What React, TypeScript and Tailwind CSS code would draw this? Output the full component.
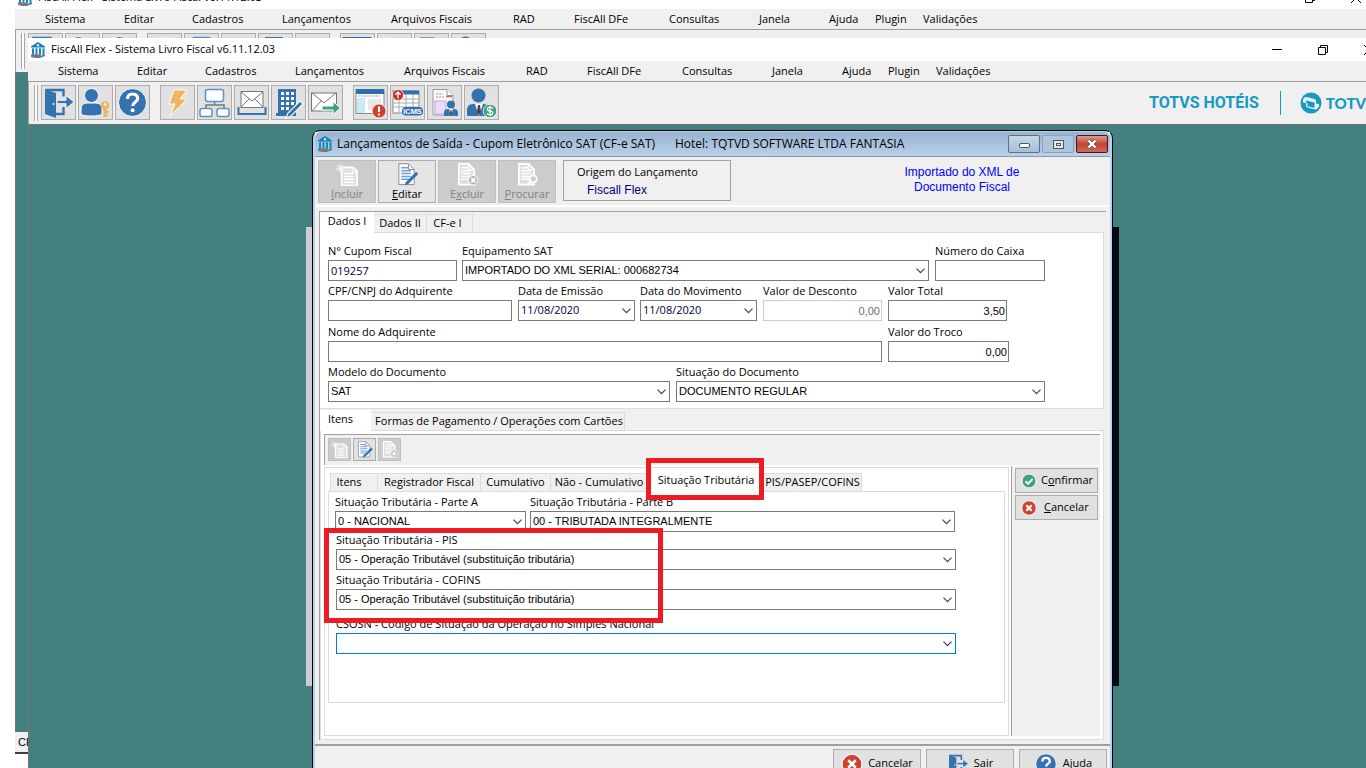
import React, { useId } from 'react';
import clsx from 'clsx';

const menuItems = [
  { label: 'Sistema', width: 'w-[79px]' },
  { label: 'Editar', width: 'w-[68px]' },
  { label: 'Cadastros', width: 'w-[90px]' },
  { label: 'Lançamentos', width: 'w-[109px]' },
  { label: 'Arquivos Fiscais', width: 'w-[122px]' },
  { label: 'RAD', width: 'w-[61px]' },
  { label: 'FiscAll DFe', width: 'w-[95px]' },
  { label: 'Consultas', width: 'w-[90px]' },
  { label: 'Janela', width: 'w-[70px]' },
  { label: 'Ajuda', width: 'w-[46px]' },
  { label: 'Plugin', width: 'w-[48px]' },
  { label: 'Validações', width: 'w-[70px]' },
];

/* ---------- Icons ---------- */

type IconProps = { className?: string };

const BankIcon: React.FC<IconProps> = ({ className = 'size-4' }) => (
  <svg viewBox="0 0 16 16" className={className} aria-hidden="true">
    <path d="M1 4.500 8 0l7 4.500v1H1z" fill="#0f7fb5" />
    <circle cx="8" cy="3.300" r="1.200" fill="#d8eef8" />
    <path d="M2 6.200h2v7H2zM5.500 6.200h2v7h-2zM9 6.200h2v7H9zM12.500 6.200h2v8h-2z" fill="#1787bd" />
    <path d="M1 12.500h7l3 1 4-1v1.500l-5 2H5l-4-1z" fill="#77787a" />
  </svg>
);

const DoorIcon: React.FC<IconProps> = ({ className = 'size-[33px]' }) => (
  <svg viewBox="0 0 33 33" className={className} aria-hidden="true">
    <path d="M3.500 4h18v6.500M21.500 21v7h-11" fill="none" stroke="#3572b0" strokeWidth="2.400" />
    <path d="M3 3l11 4v25L3 28z" fill="#3572b0" />
    <circle cx="11.500" cy="18" r="1" fill="#fff" />
    <path d="M15 14.300h9V9.500l8 6.500-8 6.500v-4.800h-9z" fill="#3572b0" stroke="#f4f4f4" strokeWidth="1" />
  </svg>
);

const UserKeyIcon = () => (
  <svg viewBox="0 0 33 33" className="size-[33px]" aria-hidden="true">
    <circle cx="12.500" cy="9.500" r="7" fill="#3572b0" stroke="#fff" strokeWidth="1" />
    <path d="M2 28v-5q0-6 6-6h9q6 0 6 6v5q-2 2-10.500 2T2 28z" fill="#3572b0" stroke="#fff" strokeWidth="1" />
    <circle cx="26" cy="19.500" r="4.300" fill="#edb55d" />
    <circle cx="26" cy="18.500" r="1.300" fill="#fff" />
    <path d="M24.500 22h3v9h-3zM27 25h3v2h-3zM27 28.500h2v2h-2z" fill="#edb55d" />
  </svg>
);

const HelpIcon: React.FC<IconProps> = ({ className = 'size-[33px]' }) => (
  <svg viewBox="0 0 33 33" className={className} aria-hidden="true">
    <circle cx="16.500" cy="16.500" r="14" fill="#3572b0" stroke="#fff" strokeWidth="1" />
    <path d="M11.500 13q0-5 5-5t5.200 4.600c0 3.400-5 3.400-5 7.400" fill="none" stroke="#fff" strokeWidth="3.200" />
    <circle cx="16.600" cy="24.300" r="2" fill="#fff" />
  </svg>
);

const BoltIcon = () => (
  <svg viewBox="0 0 33 33" className="size-[33px]" aria-hidden="true">
    <path d="M13 4h13l-7 9h7L9 30l5-12H8z" fill="#edb55d" stroke="#fff" strokeWidth="1" />
  </svg>
);

const OrgIcon = () => (
  <svg viewBox="0 0 33 33" className="size-[33px]" aria-hidden="true">
    <path d="M16.500 14v5M8 23v-4h18v4" fill="none" stroke="#777" strokeWidth="1.500" />
    <g fill="#fff" stroke="#5c90c8" strokeWidth="1.500">
      <rect x="7.500" y="3.500" width="18" height="12" rx="2" />
      <rect x="2" y="22.500" width="12" height="8" rx="2" />
      <rect x="19" y="22.500" width="12" height="8" rx="2" />
    </g>
  </svg>
);

const InboxMailIcon = () => (
  <svg viewBox="0 0 33 33" className="size-[33px]" aria-hidden="true">
    <rect x="6" y="5.500" width="22" height="16" fill="#fff" stroke="#777" />
    <path d="M6 6l11 9 11-9M6 21l8-8M28 21l-8-8" fill="none" stroke="#777" />
    <path d="M3.500 21v7h27v-7" fill="none" stroke="#3572b0" strokeWidth="2" />
  </svg>
);

const BuildingIcon = () => (
  <svg viewBox="0 0 33 33" className="size-[33px]" aria-hidden="true">
    <path d="M6 3h18v27H4v-3h2z" fill="#3572b0" />
    <path
      d="M9 6h3v3H9zM14 6h3v3h-3zM19 6h3v3h-3zM9 11h3v3H9zM14 11h3v3h-3zM19 11h3v3h-3zM9 16h3v3H9zM14 16h3v3h-3zM19 16h3v3h-3zM9 21h3v3H9zM14 21h3v3h-3z"
      fill="#fff"
    />
    <path d="M28 15l3 3-12 12-5 2 2-5z" fill="#3572b0" stroke="#fff" strokeWidth="1.200" />
  </svg>
);

const SendMailIcon = () => (
  <svg viewBox="0 0 33 33" className="size-[33px]" aria-hidden="true">
    <rect x="2.500" y="7" width="25" height="18" fill="#fff" stroke="#777" />
    <path d="M3 7l12 10L27 7M3 25l9-10" fill="none" stroke="#777" />
    <path d="M13 20h11v-4.500l7.500 6.500-7.500 6.500V24H13z" fill="#3fa37c" stroke="#fff" strokeWidth="1" />
  </svg>
);

const WindowAlertIcon = () => (
  <svg viewBox="0 0 33 33" className="size-[33px]" aria-hidden="true">
    <rect x="2" y="3.500" width="28" height="24" fill="#fff" stroke="#8a8a8a" />
    <rect x="2" y="3" width="28" height="5" fill="#2f6fb0" />
    <rect x="3" y="12" width="8" height="15" fill="#c9eafa" />
    <path d="M4 10h22" stroke="#999" strokeDasharray="2 1" />
    <rect x="14" y="13" width="13" height="11" fill="#e7e7e7" />
    <circle cx="25" cy="25" r="7" fill="#cc4430" stroke="#fff" strokeWidth=".8" />
    <path d="M25 20.500v5.500M25 27.500v2" stroke="#fff" strokeWidth="2" />
  </svg>
);

const IcmsIcon = () => (
  <svg viewBox="0 0 33 33" className="size-[33px]" aria-hidden="true">
    <rect x="2" y="5" width="26" height="22" fill="#fff" stroke="#888" />
    <rect x="2" y="4.500" width="26" height="4" fill="#2f6fb0" />
    <path d="M2 13h26M2 17h26M2 21h26M8 8v19M15 8v19M22 8v19" stroke="#aaa" />
    <circle cx="7" cy="9" r="5.500" fill="#cc2a1c" stroke="#fff" strokeWidth=".8" />
    <path d="M7 12.500V6M4.300 8.700 7 6l2.700 2.700" fill="none" stroke="#fff" strokeWidth="1.400" />
    <rect x="11" y="21" width="21" height="8.500" rx="4" fill="#2f6fb0" />
    <text x="21.500" y="28" textAnchor="middle" fontSize="7.500" fontWeight="700" fill="#fff" fontFamily="Liberation Sans, sans-serif">ICMS</text>
  </svg>
);

const DocUserIcon = () => (
  <svg viewBox="0 0 33 33" className="size-[33px]" aria-hidden="true">
    <path d="M5 3.500h14l6 6V29H5z" fill="#fafafa" stroke="#9a9a9a" />
    <path d="M19 3.500v6h6" fill="#fafafa" stroke="#9a9a9a" />
    <path d="M18 10.500h6" stroke="#d9694a" strokeWidth="1.500" />
    <path d="M8 8h7M8 11h8" stroke="#999" strokeDasharray="2 1" />
    <rect x="7" y="15" width="11" height="13" fill="#eadcf5" stroke="#c3a2dd" />
    <circle cx="23" cy="18.500" r="4" fill="#3572b0" />
    <path d="M16 30v-3q0-4 4-4h6q4 0 4 4v3z" fill="#3572b0" />
    <path d="M21 23h4l-2 6z" fill="#fff" />
    <path d="M22.500 24h1l.5 4-1 1-1-1z" fill="#444" />
  </svg>
);

const UserMoneyIcon = () => (
  <svg viewBox="0 0 33 33" className="size-[33px]" aria-hidden="true">
    <circle cx="13.500" cy="9.500" r="7" fill="#3572b0" />
    <path d="M2 30v-6q0-6 6-6h11q5 0 5 6v6z" fill="#3572b0" />
    <path d="M10 18h8l-4 12z" fill="#fff" />
    <path d="M13 19h2l1 7-2 3-2-3z" fill="#444" />
    <circle cx="25" cy="25" r="6.800" fill="#3fa37c" stroke="#fff" strokeWidth=".8" />
    <path d="M28 22.500q-1-1.300-3-1.300-2.600 0-2.600 1.900T25 25t2.700 2-2.700 1.900q-2.200 0-3-1.400M25 19.800v10.400" fill="none" stroke="#fff" strokeWidth="1.300" />
  </svg>
);

type DocKind = 'new' | 'edit' | 'delete' | 'search';

const DocIcon: React.FC<{ kind: DocKind; className?: string }> = ({ kind, className = 'size-6' }) => {
  const off = kind !== 'edit';
  return (
    <svg viewBox="0 0 24 24" className={className} aria-hidden="true">
      <path
        d={kind === 'new' ? 'M6.500 4.500h12l4 4v15h-16z' : 'M3.500 .8h10l6 6v15.700h-16z'}
        fill={off ? '#dedede' : '#fff'}
        stroke={off ? '#fff' : '#8b8b8b'}
        strokeWidth={off ? 1.8 : 1}
      />
      <path
        d={kind === 'new' ? 'M9 11h10M9 14h10M9 17h10M9 20h10' : 'M6 5h7M6 8h10M6 11h10M6 14h10M6 17h8'}
        stroke={off ? '#fff' : '#6f9fd4'}
        strokeWidth="1.500"
      />
      <path d={kind === 'new' ? 'M17.500 4.500v5h5' : 'M13.500 .8v6h6'} fill="none" stroke={off ? '#fff' : '#8b8b8b'} />
      {kind === 'new' && (
        <path d="M5 1v9M.5 5.500h9M2 2.500l6 6M8 2.500l-6 6" stroke="#f4f4f4" strokeWidth="1.200" />
      )}
      {kind === 'edit' && <path d="M10 23l1-3L21.500 9.500l2 2L13 22z" fill="#2f72b8" stroke="#2f72b8" strokeWidth=".5" />}
      {kind === 'delete' && (
        <>
          <circle cx="18.500" cy="18" r="5" fill="#b5b5b5" stroke="#fff" />
          <path d="M16.300 15.800l4.400 4.400M20.700 15.800l-4.400 4.400" stroke="#fff" strokeWidth="2" />
        </>
      )}
      {kind === 'search' && (
        <>
          <circle cx="18.500" cy="16.500" r="3.700" fill="#ccc" stroke="#fff" strokeWidth="1.800" />
          <path d="M15.500 19.500l-3 3" stroke="#fff" strokeWidth="2" />
        </>
      )}
    </svg>
  );
};

const CheckCircleIcon = () => (
  <svg viewBox="0 0 16 16" className="size-4" aria-hidden="true">
    <circle cx="8" cy="8" r="7" fill="#3fa37c" stroke="#fff" />
    <path d="M4.500 8.200l2.600 2.500L11.600 6" fill="none" stroke="#fff" strokeWidth="2" />
  </svg>
);

const CrossCircleIcon: React.FC<IconProps> = ({ className = 'size-4' }) => (
  <svg viewBox="0 0 16 16" className={className} aria-hidden="true">
    <circle cx="8" cy="8" r="7.200" fill="#cc4430" stroke="#fff" strokeWidth=".8" />
    <path d="M5.300 5.300l5.400 5.400M10.700 5.300l-5.400 5.400" stroke="#fff" strokeWidth="2" />
  </svg>
);

const TotvsMark = () => (
  <svg viewBox="0 0 22 22" className="size-[22px]" aria-hidden="true">
    <circle cx="11" cy="11" r="10.500" fill="#159ac4" />
    <path
      d="M5 5q3 0 9.500 2 1.500.5 1.500 2v2.500l3 .5v2.500l-2.500 3q-5-.3-9-2-1.500-.7-1.500-2.200V11l-3-.5V7.500z"
      fill="#f0f0f0"
    />
    <path d="M6 8.500l8.500 2v5.500l-7-1.800v-3L6 10.500z" fill="#159ac4" />
  </svg>
);

/* ---------- Application window ---------- */

const toolGroups = [
  [
    { name: 'Sair', icon: <DoorIcon /> },
    { name: 'Usuário', icon: <UserKeyIcon /> },
    { name: 'Ajuda', icon: <HelpIcon /> },
  ],
  [
    { name: 'Execução rápida', icon: <BoltIcon /> },
    { name: 'Estrutura', icon: <OrgIcon /> },
    { name: 'Entradas', icon: <InboxMailIcon /> },
    { name: 'Empresa', icon: <BuildingIcon /> },
    { name: 'Saídas', icon: <SendMailIcon /> },
  ],
  [
    { name: 'Pendências', icon: <WindowAlertIcon /> },
    { name: 'ICMS', icon: <IcmsIcon /> },
    { name: 'Documentos', icon: <DocUserIcon /> },
    { name: 'Clientes', icon: <UserMoneyIcon /> },
  ],
];

const AppWindow: React.FC<{ className: string; status?: string }> = ({ className, status }) => (
  <section className={clsx('absolute flex flex-col bg-[#f0f0f0]', className)}>
    <header className="flex h-[23px] shrink-0 items-center bg-white pl-[2px]">
      <BankIcon />
      <h1 className="ml-[5px]">FiscAll Flex - Sistema Livro Fiscal v6.11.12.03</h1>
      <div className="ml-auto flex">
        <button aria-label="Minimizar" className="flex h-5 w-[46px] items-center justify-center">
          <svg viewBox="0 0 10 10" className="size-[10px]"><path d="M0 4.500h10" stroke="#000" /></svg>
        </button>
        <button aria-label="Restaurar" className="flex h-5 w-[46px] items-center justify-center">
          <svg viewBox="0 0 10 10" className="size-[10px]" fill="none" stroke="#000">
            <path d="M.5 2.500h7v7h-7zM2.500 2.500v-2h7v7h-2" />
          </svg>
        </button>
        <button aria-label="Fechar" className="flex h-5 w-[46px] items-center justify-center">
          <svg viewBox="0 0 10 10" className="size-[10px]"><path d="M0 0l10 10M10 0L0 10" stroke="#000" /></svg>
        </button>
      </div>
    </header>
    <nav className="flex h-[21px] shrink-0 items-center border-b border-[#9c9f9c] pl-[30px]">
      {menuItems.map((item) => (
        <button key={item.label} className={clsx('shrink-0 text-left whitespace-nowrap', item.width)}>
          {item.label}
        </button>
      ))}
    </nav>
    <div className="flex h-[42px] shrink-0 items-start border-l border-[#a0a0a0] pt-[3px] pl-[5px]">
      <div className="mr-[3px] h-9 w-1 border-x border-[#a8a8a8] bg-white" />
      {toolGroups.map((group, i) => (
        <div key={i} className="mr-[10px] flex gap-[2px]">
          {group.map((tool) => (
            <button
              key={tool.name}
              aria-label={tool.name}
              className="flex size-[35px] items-center justify-center border border-[#adadad] bg-[#e1e1e1]"
            >
              {tool.icon}
            </button>
          ))}
        </div>
      ))}
      <div className="mr-[18px] ml-auto flex h-9 items-center text-[#159ac4]">
        <span className="font-['Roboto',sans-serif] text-[16px] font-bold whitespace-nowrap">TOTVS HOTÉIS</span>
        <span className="mr-[19px] ml-[21px] h-6 w-px bg-[#159ac4]" />
        <TotvsMark />
        <span className="ml-1 font-['Lato',sans-serif] text-[15px] font-black">TOTVS</span>
      </div>
    </div>
    <div className="min-h-0 grow border-t border-l border-[#747474] bg-[#43807f]" />
    {status && (
      <footer className="h-[22px] shrink-0 border-b-2 border-[#404040] pt-[2px] pl-[3px] font-['Liberation_Sans',sans-serif]">
        {status}
      </footer>
    )}
  </section>
);

/* ---------- Form controls ---------- */

const Chevron = () => (
  <svg viewBox="0 0 9 6" className="pointer-events-none absolute top-2 right-1 h-[6px] w-[9px]" aria-hidden="true">
    <path d="M.5.7 4.500 4.700 8.500.7" fill="none" stroke="#444" strokeWidth="1.200" />
  </svg>
);

type FieldProps = {
  label: string;
  className: string;
  value?: string;
  select?: boolean;
  number?: boolean;
  segoe?: boolean;
  disabled?: boolean;
  focused?: boolean;
};

const Field: React.FC<FieldProps> = ({ label, className, value = '', select, number, segoe, disabled, focused }) => {
  const id = useId();
  const box = clsx(
    'block h-[21px] w-full appearance-none border bg-white px-[2px] text-[11px] outline-none',
    disabled ? 'border-[#cccccc] text-[#6d6d6d]' : focused ? 'border-[#0078d7]' : 'border-[#7a7a7a]',
    segoe ? "font-['Open_Sans',sans-serif] text-[#00003c]" : "font-['Liberation_Sans',sans-serif]",
    number && 'pr-px text-right',
  );
  return (
    <div className={className}>
      <label htmlFor={id} className="block h-[19px] leading-5 whitespace-nowrap">{label}</label>
      {select ? (
        <div className="relative">
          <select id={id} className={box} defaultValue={value}>
            <option>{value}</option>
          </select>
          <Chevron />
        </div>
      ) : (
        <input id={id} className={box} defaultValue={value} disabled={disabled} />
      )}
    </div>
  );
};

const Tab: React.FC<{ className: string; active?: boolean; children: React.ReactNode }> = ({ className, active, children }) => (
  <button
    role="tab"
    aria-selected={!!active}
    className={clsx(
      'shrink-0 whitespace-nowrap border-[#dcdcdc]',
      active ? 'relative -mb-px h-[21px] bg-white pb-[2px]' : 'h-[18px] border-t border-r bg-[#f0f0f0]',
      className,
    )}
  >
    {children}
  </button>
);

const docActions: { kind: DocKind; key: string; before?: string; after: string }[] = [
  { kind: 'new', key: 'I', after: 'ncluir' },
  { kind: 'edit', key: 'E', after: 'ditar' },
  { kind: 'delete', before: 'E', key: 'x', after: 'cluir' },
  { kind: 'search', key: 'P', after: 'rocurar' },
];

const itemActions: { kind: DocKind; name: string }[] = [
  { kind: 'new', name: 'Incluir item' },
  { kind: 'edit', name: 'Editar item' },
  { kind: 'delete', name: 'Excluir item' },
];

const DialogTitle = () => (
  <header className="flex h-[25px] items-center rounded-t-md border-b border-[#8e99a5] bg-linear-to-b from-[#9ab3d0] to-[#b9d1ea] pl-[2px]">
    <BankIcon />
    <h2 className="ml-1 w-[338px] text-[12px]">Lançamentos de Saída - Cupom Eletrônico SAT (CF-e SAT)</h2>
    <span className="text-[12px]">Hotel: TQTVD SOFTWARE LTDA FANTASIA</span>
    <div className="mr-[2px] ml-auto flex gap-[2px]">
      <button aria-label="Minimizar" className="flex h-[18px] w-8 items-center justify-center rounded-xs border border-[#5d7085] bg-linear-to-b from-[#c6d8ea] to-[#a5bfd9]">
        <span className="mt-[3px] h-[5px] w-[11px] rounded-xs border border-[#555] bg-white" />
      </button>
      <button aria-label="Maximizar" className="flex h-[18px] w-8 items-center justify-center rounded-xs border border-[#8ba3bb] bg-[#adc5df]">
        <span className="flex h-[9px] w-[11px] items-center justify-center border border-[#555] bg-[#e8e8e8]">
          <span className="h-[3px] w-[5px] border border-[#555]" />
        </span>
      </button>
      <button aria-label="Fechar" className="flex h-[18px] w-8 items-center justify-center rounded-xs border border-[#4a1420] bg-linear-to-b from-[#dd9a8c] via-[#c0452f] to-[#cf6a50]">
        <svg viewBox="0 0 12 10" className="h-[10px] w-3">
          <path d="M2.500 1.500l7 7M9.500 1.500l-7 7" stroke="#555" strokeWidth="4" />
          <path d="M2.500 1.500l7 7M9.500 1.500l-7 7" stroke="#fff" strokeWidth="2.400" />
        </svg>
      </button>
    </div>
  </header>
);

const DialogToolbar = () => (
  <div className="flex h-[50px] border-b-2 border-white px-[3px] pt-[3px]">
    <div className="flex gap-[2px]">
      {docActions.map((action) => (
        <button
          key={action.kind}
          className={clsx(
            'flex h-[43px] w-[58px] flex-col items-center border pt-[2px] leading-4',
            action.kind === 'edit' ? 'border-[#adadad] bg-[#e5e5e5]' : 'border-[#bfbfbf] bg-[#cccccc] text-[#838383]',
          )}
        >
          <DocIcon kind={action.kind} />
          <span>{action.before}<span className="underline">{action.key}</span>{action.after}</span>
        </button>
      ))}
    </div>
    <div className="ml-[7px] h-[41px] w-[168px] border border-[#a0a0a0] pl-[13px] leading-[18px]">
      <p className="pt-[2px]">Origem do Lançamento</p>
      <p className="pl-[10px] font-['Liberation_Sans',sans-serif] text-[12px] text-[#000080]">Fiscall Flex</p>
    </div>
    <p className="mr-[75px] ml-auto w-[140px] pt-[5px] text-center font-['Liberation_Sans',sans-serif] text-[12px] leading-[15px] text-[#0000ff]">
      Importado do XML de Documento Fiscal
    </p>
  </div>
);

const DocumentData = () => (
  <>
    <div role="tablist" className="flex items-end">
      <Tab active className="w-[54px]">Dados I</Tab>
      <Tab className="w-[53px]">Dados II</Tab>
      <Tab className="w-[46px] pr-[4px]">CF-e I</Tab>
    </div>
    <div className="mr-[2px] h-[177px] border-t border-r border-b border-[#dcdcdc] bg-white pt-2 pl-2">
      <div className="flex">
        <Field label="N° Cupom Fiscal" className="mr-[5px] w-[129px]" value="019257" segoe />
        <Field label="Equipamento SAT" className="mr-[6px] w-[467px]" value="IMPORTADO DO XML SERIAL: 000682734" select />
        <Field label="Número do Caixa" className="w-[110px]" />
      </div>
      <div className="flex">
        <Field label="CPF/CNPJ do Adquirente" className="mr-[6px] w-[184px]" />
        <Field label="Data de Emissão" className="mr-[5px] w-[117px]" value="11/08/2020" select segoe />
        <Field label="Data do Movimento" className="mr-[6px] w-[117px]" value="11/08/2020" select segoe />
        <Field label="Valor de Desconto" className="mr-[6px] w-[119px]" value="0,00" number disabled />
        <Field label="Valor Total" className="w-[119px]" value="3,50" number />
      </div>
      <div className="mt-px flex">
        <Field label="Nome do Adquirente" className="mr-[6px] w-[554px]" />
        <Field label="Valor do Troco" className="w-[121px]" value="0,00" number />
      </div>
      <div className="flex">
        <Field label="Modelo do Documento" className="mr-[6px] w-[342px]" value="SAT" select />
        <Field label="Situação do Documento" className="w-[369px]" value="DOCUMENTO REGULAR" select />
      </div>
    </div>
  </>
);

const TaxSituation = () => (
  <div className="grow border border-[#dcdcdc] bg-white px-[3px] pt-[3px]">
    <div role="tablist" className="flex items-end pl-[2px]">
      <Tab className="w-12 border-l pr-[10px]">Itens</Tab>
      <Tab className="w-[103px]">Registrador Fiscal</Tab>
      <Tab className="w-[70px]">Cumulativo</Tab>
      <Tab className="w-[97px]">Não - Cumulativo</Tab>
      <Tab active className="w-[116px]">Situação Tributária</Tab>
      <Tab className="w-[98px]">PIS/PASEP/COFINS</Tab>
    </div>
    <div className="h-[212px] border border-[#dcdcdc] pl-[6px]">
      <div className="flex gap-1">
        <Field label="Situação Tributária - Parte A" className="w-[191px]" value="0 - NACIONAL" select />
        <Field label="Situação Tributária - Parte B" className="w-[425px]" value="00 - TRIBUTADA INTEGRALMENTE" select />
      </div>
      <div className="-mt-[2px] w-[621px] pl-px">
        <Field label="Situação Tributária - PIS" className="w-full" value="05 - Operação Tributável (substituição tributária)" select />
        <Field label="Situação Tributária - COFINS" className="w-full" value="05 - Operação Tributável (substituição tributária)" select />
        <Field label="CSOSN - Código de Situação da Operação no Simples Nacional" className="w-full pt-1" select focused />
      </div>
    </div>
  </div>
);

const ItemsArea = () => (
  <>
    <div role="tablist" className="mt-px flex items-end">
      <Tab active className="w-[51px] pr-[10px]">Itens</Tab>
      <Tab className="w-[254px] pl-[3px]">Formas de Pagamento / Operações com Cartões</Tab>
    </div>
    <div className="mr-[2px] border border-[#dcdcdc] bg-white p-[3px]">
      <div className="flex h-[31px] gap-[2px] border-t border-l border-[#a0a0a0] bg-[#f0f0f0] pt-[3px] pl-[3px]">
        {itemActions.map((action) => (
          <button
            key={action.kind}
            aria-label={action.name}
            className={clsx(
              'flex size-[23px] items-center justify-center border',
              action.kind === 'edit' ? 'border-[#adadad] bg-[#e1e1e1]' : 'border-[#bfbfbf] bg-[#cccccc]',
            )}
          >
            <DocIcon kind={action.kind} className="size-[17px]" />
          </button>
        ))}
      </div>
      <div className="mt-px flex h-[270px]">
        <div className="flex grow pt-px">
          <TaxSituation />
        </div>
        <div className="ml-[2px] flex w-[89px] shrink-0 flex-col gap-[2px] border-l border-[#a0a0a0] bg-[#f0f0f0] pt-[2px] pl-[3px]">
          <button className="flex h-[25px] w-[83px] items-center border border-[#adadad] bg-[#e1e1e1] pl-[5px]">
            <CheckCircleIcon />
            <span className="ml-1">C<span className="underline">o</span>nfirmar</span>
          </button>
          <button className="flex h-[25px] w-[83px] items-center border border-[#adadad] bg-[#e1e1e1] pl-[5px]">
            <CrossCircleIcon />
            <span className="ml-[7px]"><span className="underline">C</span>ancelar</span>
          </button>
        </div>
      </div>
    </div>
  </>
);

const DialogFooter = () => (
  <footer className="mt-[4px] flex h-10 justify-end gap-[5px] border-t-2 border-[#a0a0a0] pt-[3px] pr-[3px]">
    <button className="flex h-[29px] w-[88px] items-center justify-center gap-[5px] border border-[#adadad] bg-[#e1e1e1]">
      <CrossCircleIcon className="size-[22px]" />
      Cancelar
    </button>
    <button className="flex h-[29px] w-[88px] items-center justify-center gap-[5px] border border-[#adadad] bg-[#e1e1e1]">
      <DoorIcon className="size-[22px]" />
      Sair
    </button>
    <button className="flex h-[29px] w-[88px] items-center justify-center gap-[5px] border border-[#adadad] bg-[#e1e1e1]">
      <HelpIcon className="size-[24px]" />
      Ajuda
    </button>
  </footer>
);

const App: React.FC = () => {
  return (
    <main className="relative h-screen overflow-hidden bg-white font-['Open_Sans','Noto_Sans',sans-serif] text-[11px] text-black">
      <AppWindow className="top-[-14px] right-[-13px] bottom-[14px] left-[15px]" status="CE" />
      <AppWindow className="top-[38px] right-[-26px] bottom-[-40px] left-[28px]" />

      {/* wallpaper of the MDI area, visible only at the dialog's sides */}
      <div className="absolute top-[227px] left-[306px] h-[459px] w-[813px] bg-linear-to-r from-[#cdcfd8] to-[#05090f]" />

      <section className="absolute top-[130px] left-[312px] w-[801px] rounded-t-lg border border-black bg-[#b9d1ea] px-[2px] pt-px">
        <div className="bg-[#f0f0f0]">
          <DialogTitle />
          <DialogToolbar />
          <div className="mx-1 mt-[4px] border-t border-l border-[#a0a0a0]">
            <DocumentData />
            <ItemsArea />
          </div>
          <DialogFooter />
        </div>
      </section>

      {/* callouts */}
      <div className="pointer-events-none absolute top-[458px] left-[646px] h-[42px] w-[118px] border-5 border-[#ed1c24]" />
      <div className="pointer-events-none absolute top-[528px] left-[324px] h-[95px] w-[339px] border-5 border-[#ed1c24]" />
    </main>
  );
};

export default App;
